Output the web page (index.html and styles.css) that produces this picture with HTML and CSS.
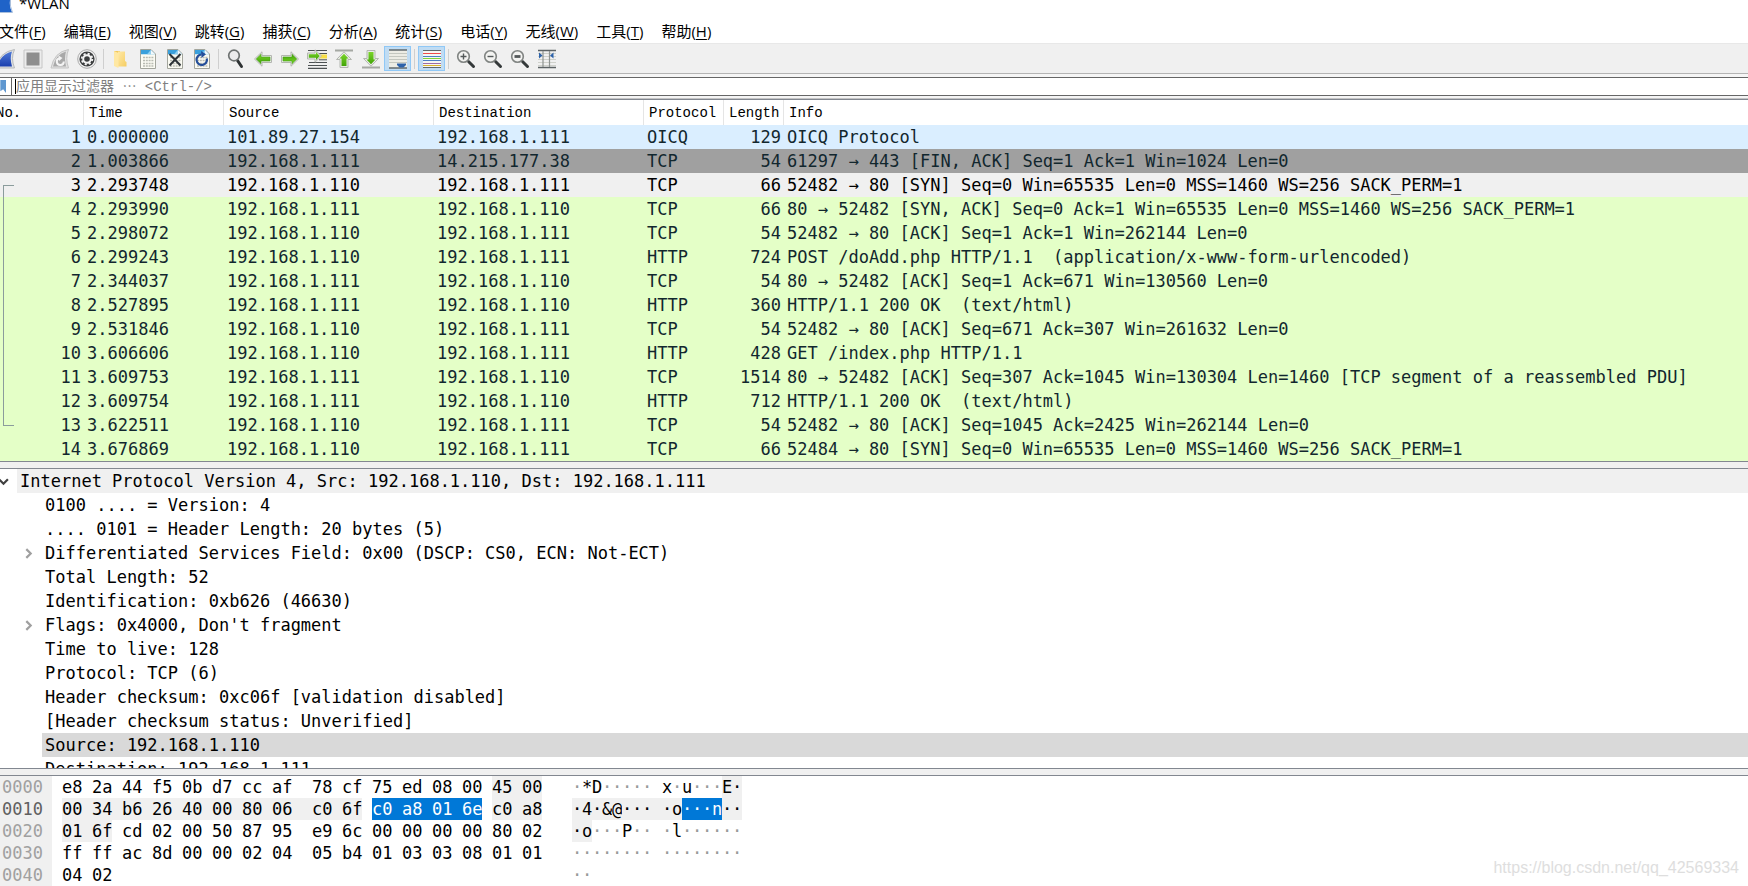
FILE: index.html
```
<!DOCTYPE html>
<html lang="zh-CN">
<head>
<meta charset="utf-8">
<title>*WLAN</title>
<link rel="stylesheet" href="styles.css">
</head>
<body>
<svg class="defs" aria-hidden="true">
  <defs>
    <linearGradient id="gGreen" x1="0" y1="0" x2="0" y2="1"><stop offset="0" stop-color="#7bd52a"/><stop offset="1" stop-color="#41a307"/></linearGradient>
    <linearGradient id="gBlue" x1="0" y1="0" x2="0" y2="1"><stop offset="0" stop-color="#4f7ad8"/><stop offset="1" stop-color="#1b3fae"/></linearGradient>
    <linearGradient id="gFold" x1="0" y1="0" x2="1" y2="1"><stop offset="0" stop-color="#ffe9a6"/><stop offset="1" stop-color="#f5cd62"/></linearGradient>
    <symbol id="page" viewBox="0 0 20 20">
      <path d="M2.500.5H13L17.500 5V19.500H2.500z" fill="#fbfbf3" stroke="#a3a59c"/>
      <path d="M3 1H12.800L17 5.200H3z" fill="#3aa0dc"/>
      <path d="M9 5.200L12.800 1V5.200z" fill="#8fd0f2"/><path d="M12.800 1V5.200H17z" fill="#f4f9fb"/>
      <path d="M5 8.500H15.500M5 11.500H15.500M5 14.500H15.500M5 17H15.500" stroke="#b9bbb2" stroke-width="1.600" stroke-dasharray="2 .8"/>
    </symbol>
    <symbol id="arrow" viewBox="0 0 20 20">
      <path d="M1.500 10L9 2.800V6.500H18.500V13.500H9V17.200z" fill="#e9ebe7" stroke="#b3b6b0"/>
      <path d="M3.200 10L8 5.300V8H17V12H8V14.700z" fill="url(#gGreen)" stroke="#459f16" stroke-width=".6"/>
    </symbol>
    <symbol id="lens" viewBox="0 0 20 20">
      <path d="M12.500 12.500L17.500 17.500" stroke="#34393a" stroke-width="3" stroke-linecap="round"/>
      <circle cx="7.500" cy="7.500" r="5.800" fill="#f3f3f1" stroke="#808482" stroke-width="1.600"/>
    </symbol>
  </defs>
</svg>

<header class="title">
  <svg class="title-icon" viewBox="0 0 13 13"><path d="M0 0H10Q9 6 12 12H0z" fill="#1f63c8"/><path d="M10.500 0Q9.500 6 12.500 12.500H0" fill="none" stroke="#a9bfdc"/></svg>
  <h1>*WLAN</h1>
</header>

<nav class="menu">
  <button>文件(<u>F</u>)</button><button>编辑(<u>E</u>)</button><button>视图(<u>V</u>)</button><button>跳转(<u>G</u>)</button><button>捕获(<u>C</u>)</button><button>分析(<u>A</u>)</button><button>统计(<u>S</u>)</button><button>电话(<u>Y</u>)</button><button>无线(<u>W</u>)</button><button>工具(<u>T</u>)</button><button>帮助(<u>H</u>)</button>
</nav>

<div class="toolbar" role="toolbar">
  <button aria-label="开始捕获"><svg viewBox="0 0 20 20"><path d="M0 19Q3 3 18.500.5Q14.500 9 18.500 19z" fill="#dfe1e3" stroke="#b6b9bb"/><path d="M1 17.500Q5 5 16 2.500Q13.500 9 16 17.500z" fill="url(#gBlue)"/></svg></button>
  <button aria-label="停止捕获"><svg viewBox="0 0 20 20"><path d="M1 1H19V19H1z" fill="#ececec" stroke="#c6c6c6"/><path d="M3.500 3.500H16.500V16.500H3.500z" fill="#8e8e8e"/></svg></button>
  <button aria-label="重新捕获"><svg viewBox="0 0 20 20"><path d="M1 19Q4 3 18.500.5Q15 9 18.500 19z" fill="#e2e2e2" stroke="#c4c4c4"/><path d="M3 17.500Q6 5 16 2.500Q14 9 16 17.500z" fill="#a9a9a9"/><path d="M13.800 12.500A3.500 3.500 0 1 1 9.500 9.200" fill="none" stroke="#f4f4f4" stroke-width="2"/><path d="M8.500 6.500L12.500 9L9 12z" fill="#f4f4f4"/></svg></button>
  <button aria-label="捕获选项"><svg viewBox="0 0 20 20"><circle cx="10" cy="10" r="9.300" fill="#f1f1f1" stroke="#a9a9a9"/><circle cx="10" cy="10" r="7.600" fill="#3b3d3e"/><circle cx="10" cy="10" r="3.800" fill="none" stroke="#f3f3f3" stroke-width="2"/><circle cx="10" cy="10" r="5.300" fill="none" stroke="#f3f3f3" stroke-width="1.800" stroke-dasharray="2.100 2.060"/></svg></button>
  <i class="sep"></i>
  <button aria-label="打开"><svg viewBox="0 0 20 20"><path d="M3 2H9V17H3z" fill="#f0c75c"/><path d="M7 2.500H14V12L15.500 13V17.500H7z" fill="url(#gFold)"/><path d="M3 2L7.500 4V19L3 17z" fill="#ffe8a3"/></svg></button>
  <button aria-label="保存"><svg viewBox="0 0 20 20"><use href="#page"/></svg></button>
  <button aria-label="关闭"><svg viewBox="0 0 20 20"><use href="#page"/><path d="M4.500 5L15.500 16.500M15.500 5L4.500 16.500" stroke="#2c3236" stroke-width="2"/></svg></button>
  <button aria-label="重新加载"><svg viewBox="0 0 20 20"><use href="#page"/><path d="M14.800 9.500A5.200 5.200 0 1 1 9.500 5.500" fill="none" stroke="#254f9a" stroke-width="2.200"/><path d="M9 2L14 5.200L9.500 9z" fill="#254f9a"/></svg></button>
  <i class="sep"></i>
  <button aria-label="查找分组"><svg viewBox="0 0 20 20"><path d="M11.500 11.500L15.500 17.500" stroke="#2e3233" stroke-width="3" stroke-linecap="round"/><circle cx="8" cy="6.500" r="5.300" fill="#ececec" stroke="#6f7372" stroke-width="1.700"/></svg></button>
  <button aria-label="上一分组"><svg viewBox="0 0 20 20"><use href="#arrow"/></svg></button>
  <button aria-label="下一分组"><svg viewBox="0 0 20 20"><use href="#arrow" transform="rotate(180 10 10)"/></svg></button>
  <button aria-label="转到分组"><svg viewBox="0 0 20 20"><path d="M1 1.500H20M8 4.500H20M2 13.500H20M1 16.500H20M1 19.300H20" stroke="#4c5153" stroke-width="1.200"/><path d="M12 7.500H20" stroke="#f7de46" stroke-width="4"/><path d="M12 10.800H20" stroke="#4c5153"/><path d="M14.500 7L8 .8V4H.5V10H8V13.200z" fill="#e9ebe7" stroke="#b3b6b0"/><path d="M12.800 7L9 3V5.200H1.800V8.800H9V11z" fill="url(#gGreen)"/></svg></button>
  <button aria-label="首个分组"><svg viewBox="0 0 20 20"><path d="M1 1.500H19" stroke="#a5a8a3" stroke-width="2"/><path d="M10 2.800L17.500 10.500H14V18.500H6V10.500H2.500z" fill="#e9ebe7" stroke="#b3b6b0"/><path d="M10 4.800L14.500 9.500H12.500V17H7.500V9.500H5.500z" fill="url(#gGreen)"/></svg></button>
  <button aria-label="最新分组"><svg viewBox="0 0 20 20"><path d="M1 18.500H19" stroke="#a5a8a3" stroke-width="2"/><path d="M10 17.200L17.500 9.500H14V1.500H6V9.500H2.500z" fill="#e9ebe7" stroke="#b3b6b0"/><path d="M10 15.200L14.500 10.500H12.500V3H7.500V10.500H5.500z" fill="url(#gGreen)"/></svg></button>
  <button class="on" aria-label="自动滚动"><svg viewBox="0 0 20 20"><path d="M1 1H19V19H1z" fill="#ececE4"/><path d="M1 4.500H19M1 7.500H19M1 10.500H19M1 13.500H19" stroke="#c4c7bf"/><path d="M1 1H19M1 19H19" stroke="#62696c" stroke-width="1.400"/><path d="M9 14.500H18V16L15.500 18.500H11.500L9 16z" fill="#2d62aa"/></svg></button>
  <i class="sep"></i>
  <button class="on" aria-label="着色"><svg viewBox="0 0 20 20"><path d="M1 1H19V19H1z" fill="#f6f6f2"/><path d="M1 1.500H19M1 18.500H19" stroke="#62696c"/><path d="M1 4.500H19" stroke="#ee4b4b"/><path d="M1 7.500H19" stroke="#4e7fc4"/><path d="M1 9.500H19" stroke="#7ed63a"/><path d="M1 11.500H19" stroke="#4e7fc4"/><path d="M1 14.500H19" stroke="#9a6ba5"/><path d="M1 16.500H19" stroke="#d8b12a"/></svg></button>
  <i class="sep"></i>
  <button aria-label="放大"><svg viewBox="0 0 20 20"><use href="#lens"/><path d="M4.500 7.500H10.500M7.500 4.500V10.500" stroke="#54595a" stroke-width="1.400"/></svg></button>
  <button aria-label="缩小"><svg viewBox="0 0 20 20"><use href="#lens"/><path d="M4.500 7.500H10.500" stroke="#54595a" stroke-width="1.400"/></svg></button>
  <button aria-label="原始大小"><svg viewBox="0 0 20 20"><use href="#lens"/><path d="M4.500 7.500H10.500" stroke="#54595a" stroke-width="2.800"/></svg></button>
  <button aria-label="调整列宽"><svg viewBox="0 0 20 20"><path d="M1 4.500H19M1 7.500H19M1 10.500H19M1 13.500H19M1 16.500H19" stroke="#cfd1cb"/><path d="M1 1.500H19M1 18.500H19" stroke="#5d6365" stroke-width="1.400"/><path d="M6 2V18M12.500 2V18" stroke="#8f9492" stroke-width="1.200"/><path d="M2 3.500L5.500 6.500L2 9.500zM16.500 3.500L13 6.500L16.500 9.500z" fill="#2d62aa"/></svg></button>
</div>

<div class="filter">
  <button class="bookmark" aria-label="书签"><svg viewBox="0 0 12 18"><path d="M0 2H6V16L3 12L0 14z" fill="#5f97d0"/></svg></button>
  <i class="caret"></i>
  <input type="text" aria-label="显示过滤器" placeholder="应用显示过滤器 ⋯ &lt;Ctrl-/&gt;">
</div>

<main class="panes">
  <section class="packets">
    <table>
      <colgroup><col class="c-no"><col class="c-time"><col class="c-addr"><col class="c-addr"><col class="c-proto"><col class="c-len"><col></colgroup>
      <thead><tr><th class="first">No.</th><th>Time</th><th>Source</th><th>Destination</th><th>Protocol</th><th>Length</th><th>Info</th></tr></thead>
      <tbody>
        <tr class="udp"><td>1</td><td>0.000000</td><td>101.89.27.154</td><td>192.168.1.111</td><td>OICQ</td><td>129</td><td>OICQ Protocol</td></tr>
        <tr class="fin"><td>2</td><td>1.003866</td><td>192.168.1.111</td><td>14.215.177.38</td><td>TCP</td><td>54</td><td>61297 → 443 [FIN, ACK] Seq=1 Ack=1 Win=1024 Len=0</td></tr>
        <tr class="current"><td>3</td><td>2.293748</td><td>192.168.1.110</td><td>192.168.1.111</td><td>TCP</td><td>66</td><td>52482 → 80 [SYN] Seq=0 Win=65535 Len=0 MSS=1460 WS=256 SACK_PERM=1</td></tr>
        <tr><td>4</td><td>2.293990</td><td>192.168.1.111</td><td>192.168.1.110</td><td>TCP</td><td>66</td><td>80 → 52482 [SYN, ACK] Seq=0 Ack=1 Win=65535 Len=0 MSS=1460 WS=256 SACK_PERM=1</td></tr>
        <tr><td>5</td><td>2.298072</td><td>192.168.1.110</td><td>192.168.1.111</td><td>TCP</td><td>54</td><td>52482 → 80 [ACK] Seq=1 Ack=1 Win=262144 Len=0</td></tr>
        <tr><td>6</td><td>2.299243</td><td>192.168.1.110</td><td>192.168.1.111</td><td>HTTP</td><td>724</td><td>POST /doAdd.php HTTP/1.1  (application/x-www-form-urlencoded)</td></tr>
        <tr><td>7</td><td>2.344037</td><td>192.168.1.111</td><td>192.168.1.110</td><td>TCP</td><td>54</td><td>80 → 52482 [ACK] Seq=1 Ack=671 Win=130560 Len=0</td></tr>
        <tr><td>8</td><td>2.527895</td><td>192.168.1.111</td><td>192.168.1.110</td><td>HTTP</td><td>360</td><td>HTTP/1.1 200 OK  (text/html)</td></tr>
        <tr><td>9</td><td>2.531846</td><td>192.168.1.110</td><td>192.168.1.111</td><td>TCP</td><td>54</td><td>52482 → 80 [ACK] Seq=671 Ack=307 Win=261632 Len=0</td></tr>
        <tr><td>10</td><td>3.606606</td><td>192.168.1.110</td><td>192.168.1.111</td><td>HTTP</td><td>428</td><td>GET /index.php HTTP/1.1</td></tr>
        <tr><td>11</td><td>3.609753</td><td>192.168.1.111</td><td>192.168.1.110</td><td>TCP</td><td>1514</td><td>80 → 52482 [ACK] Seq=307 Ack=1045 Win=130304 Len=1460 [TCP segment of a reassembled PDU]</td></tr>
        <tr><td>12</td><td>3.609754</td><td>192.168.1.111</td><td>192.168.1.110</td><td>HTTP</td><td>712</td><td>HTTP/1.1 200 OK  (text/html)</td></tr>
        <tr><td>13</td><td>3.622511</td><td>192.168.1.110</td><td>192.168.1.111</td><td>TCP</td><td>54</td><td>52482 → 80 [ACK] Seq=1045 Ack=2425 Win=262144 Len=0</td></tr>
        <tr><td>14</td><td>3.676869</td><td>192.168.1.110</td><td>192.168.1.111</td><td>TCP</td><td>66</td><td>52484 → 80 [SYN] Seq=0 Win=65535 Len=0 MSS=1460 WS=256 SACK_PERM=1</td></tr>
      </tbody>
    </table>
    <i class="conversation"></i>
  </section>

  <section class="details">
    <div class="node root"><svg class="chev open" viewBox="0 0 10 10"><path d="M1 3L5 7L9 3"/></svg><span>Internet Protocol Version 4, Src: 192.168.1.110, Dst: 192.168.1.111</span></div>
    <div class="node"><span>0100 .... = Version: 4</span></div>
    <div class="node"><span>.... 0101 = Header Length: 20 bytes (5)</span></div>
    <div class="node"><svg class="chev" viewBox="0 0 10 10"><path d="M3 1L7 5L3 9"/></svg><span>Differentiated Services Field: 0x00 (DSCP: CS0, ECN: Not-ECT)</span></div>
    <div class="node"><span>Total Length: 52</span></div>
    <div class="node"><span>Identification: 0xb626 (46630)</span></div>
    <div class="node"><svg class="chev" viewBox="0 0 10 10"><path d="M3 1L7 5L3 9"/></svg><span>Flags: 0x4000, Don't fragment</span></div>
    <div class="node"><span>Time to live: 128</span></div>
    <div class="node"><span>Protocol: TCP (6)</span></div>
    <div class="node"><span>Header checksum: 0xc06f [validation disabled]</span></div>
    <div class="node"><span>[Header checksum status: Unverified]</span></div>
    <div class="node selected"><span>Source: 192.168.1.110</span></div>
    <div class="node"><span>Destination: 192.168.1.111</span></div>
  </section>

  <section class="bytes" id="bytes"></section>
</main>
<p class="watermark">https://blog.csdn.net/qq_42569334</p>
<script src="bytes.js"></script>
</body>
</html>
```
FILE: styles.css
```
* { box-sizing: border-box; }

body {
  margin: 0;
  height: 100vh;
  display: flex;
  flex-direction: column;
  overflow: hidden;
  position: relative;
  background: #fff;
  color: #000;
  font: 15px/20px "Open Sans", "Noto Sans CJK SC", sans-serif;
}

button {
  border: 0;
  padding: 0;
  margin: 0;
  background: none;
  font: inherit;
  color: inherit;
}

.defs { position: absolute; width: 0; height: 0; }

.title { display: flex; height: 20px; gap: 6px; overflow: hidden; flex: none; }
.title-icon { width: 13px; height: 13px; }
.title h1 { margin: 0; font-size: 15px; font-weight: 400; line-height: 6px; }

.menu { display: flex; flex: none; height: 23px; margin-left: -10px; }
.menu button { padding: 0 9px; line-height: 23px; white-space: nowrap; }
.menu u { text-underline-offset: 2px; }

.toolbar {
  display: flex;
  flex: none;
  align-items: center;
  height: 31px;
  background: #f0f0f0;
  border-top: 1px solid #e8e8e8;
  border-bottom: 1px solid #b4b4b4;
}
.toolbar button { width: 27px; height: 25px; flex: none; display: grid; place-items: center; }
.toolbar button:first-child { margin-left: -8px; }
.toolbar svg { width: 20px; height: 20px; display: block; }
.toolbar .on { background: #c0dcf3; border: 1px solid #90c8f6; }
.sep { width: 7px; height: 20px; flex: none; background: linear-gradient(#cfcfcf, #cfcfcf) center / 1px 100% no-repeat; }

.filter {
  display: flex;
  flex: none;
  align-items: stretch;
  height: 19px;
  margin: 3px 0 2px;
  border: solid #666;
  border-width: 1px 0;
  background: #fff;
  box-shadow: 0 0 0 3px #f5f5f5;
}
.bookmark { width: 12px; border-right: 1px solid #666; }
.bookmark svg { width: 12px; height: 17px; display: block; }
.caret { width: 1px; margin: 1px 0 1px 3px; background: #000; }
.filter input {
  flex: 1;
  min-width: 0;
  border: 0;
  padding: 0;
  outline: 0;
  background: none;
  font: 14px "Liberation Mono", "Noto Sans CJK SC", monospace;
}
.filter input::placeholder { color: #808080; opacity: 1; }

.panes {
  flex: 1;
  min-height: 0;
  display: flex;
  flex-direction: column;
  gap: 6px;
  background: #f0f0f0;
  border-top: 1px solid #c4c4c4;
  font: 17px/24px "DejaVu Sans Mono", monospace;
}
.panes > section { background: #fff; border: solid #828790; border-width: 1px 0; }

.packets { position: relative; flex: none; overflow: hidden; }
table { width: 100%; table-layout: fixed; border-collapse: separate; border-spacing: 0; color: #12272e; }
.c-no { width: 84px; }
.c-time { width: 140px; }
.c-addr { width: 210px; }
.c-proto { width: 80px; }
.c-len { width: 60px; }
th {
  height: 25px;
  padding: 2px 0 0 5px;
  border-right: 1px solid #e5e5e5;
  color: #000;
  font: 14px/23px "Liberation Mono", monospace;
  text-align: left;
}
th:last-child { border-right: 0; }
th.first { padding-left: 0; text-indent: -4px; }
td { height: 24px; padding: 0 3px; white-space: pre; }
td:first-child, td:nth-child(6) { text-align: right; }
tbody tr { background: #e4ffc7; }
tbody .udp { background: #daeeff; }
tbody .fin { background: #a0a0a0; }
tbody .current { background: #f0f0f0; color: #000; }

.conversation {
  position: absolute;
  left: 3px;
  top: 85px;
  width: 11px;
  height: 241px;
  border: 1px solid #8b9c9c;
  border-right: 0;
}

.details { flex: 1; min-height: 0; overflow: hidden; }
.node { position: relative; display: flex; padding-left: 42px; }
.node span { flex: 1; padding-left: 3px; white-space: pre; }
.root { padding-left: 17px; }
.root span { background: #f0f0f0; }
.selected span { background: #d9d9d9; }
.chev {
  position: absolute;
  left: 23px;
  top: 7px;
  width: 11px;
  height: 11px;
  fill: none;
  stroke: #a0a0a0;
  stroke-width: 2;
}
.root .chev { left: -2px; stroke: #404040; }

.panes > .bytes { flex: none; border-bottom: 0; line-height: 22px; }
.line { display: flex; height: 22px; }
.offset { width: 52px; padding-left: 2px; margin-right: 10px; background: #f0f0f0; color: #a0a0a0; }
.offset.active { color: #606060; }
.hex { display: grid; grid-template-columns: repeat(8, 30px) 10px repeat(8, 30px); width: 510px; }
.ascii { display: grid; grid-template-columns: repeat(8, 10px) 10px repeat(8, 10px); }
.hex b, .ascii b { font-weight: 400; width: 20px; }
.ascii b { width: 10px; }
.hex b:nth-child(9), .ascii b:nth-child(9) { grid-column: 10; }
.hex .joined { width: 30px; }
.hex .joined:nth-child(8) { width: 40px; }
.ascii .joined:nth-child(8) { width: 20px; }
.dot { color: #999; }
.field { background: #f0f0f0; color: #000; }
.picked { background: #0078d7; color: #fff; }

.watermark {
  position: absolute;
  right: 9px;
  bottom: 8px;
  margin: 0;
  color: #dedede;
  font: 16px/20px "Liberation Sans", sans-serif;
}
```
FILE: bytes.js
```
const rows = [
  "e8 2a 44 f5 0b d7 cc af 78 cf 75 ed 08 00 45 00",
  "00 34 b6 26 40 00 80 06 c0 6f c0 a8 01 6e c0 a8",
  "01 6f cd 02 00 50 87 95 e9 6c 00 00 00 00 80 02",
  "ff ff ac 8d 00 00 02 04 05 b4 01 03 03 08 01 01",
  "04 02"
].map(r => r.split(" "));

// The IPv4 header spans bytes 14-33; its source address is bytes 26-29.
const kind = i => i >= 26 && i <= 29 ? "picked" : i >= 14 && i <= 33 ? "field" : "";

function cell(text, i, dot) {
  const b = document.createElement("b");
  const k = kind(i);
  b.textContent = text;
  if (k) b.classList.add(k);
  else if (dot) b.classList.add("dot");
  if (k && i % 16 !== 15 && kind(i + 1) === k) b.classList.add("joined");
  return b;
}

function box(cls) {
  const el = document.createElement("div");
  el.className = cls;
  return el;
}

rows.forEach((bytes, r) => {
  const line = box("line");
  const offset = box(r === 1 ? "offset active" : "offset");
  offset.textContent = (r * 16).toString(16).padStart(4, "0");
  const hex = box("hex");
  const ascii = box("ascii");
  bytes.forEach((byte, c) => {
    const code = parseInt(byte, 16);
    const printable = code > 32 && code < 127;
    hex.append(cell(byte, r * 16 + c, false));
    ascii.append(cell(printable ? String.fromCharCode(code) : "·", r * 16 + c, !printable));
  });
  line.append(offset, hex, ascii);
  document.getElementById("bytes").append(line);
});
```
